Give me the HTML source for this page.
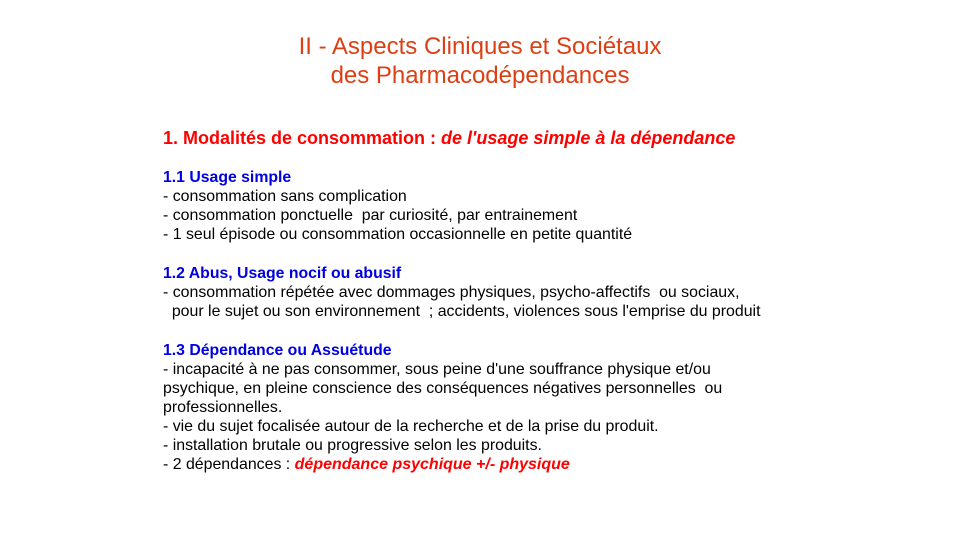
<!DOCTYPE html>
<html><head><meta charset="utf-8"><style>
body{margin:0;width:960px;height:540px;background:#fff;position:relative;overflow:hidden;font-family:"Liberation Sans",Arial,sans-serif;}
.t{position:absolute;left:0;width:960px;text-align:center;color:#dd3f14;font-size:24px;line-height:28px;}
.l{position:absolute;left:163px;font-size:15.9px;line-height:19px;color:#000;white-space:pre;}
.b{color:#0000e0;font-weight:bold;font-size:15.8px;}
.r{color:#f00;font-weight:bold;font-size:18px;line-height:20px;}
.ri{color:#f00;font-weight:bold;font-style:italic;font-size:16px;}
</style></head><body>
<div class="t" style="top:33px">II - Aspects Cliniques et Sociétaux</div>
<div class="t" style="top:62px">des Pharmacodépendances</div>
<div class="l r" style="top:128px">1. Modalités de consommation : <i>de l'usage simple à la dépendance</i></div>
<div class="l b" style="top:168px">1.1 Usage simple</div>
<div class="l" style="top:187px">- consommation sans complication</div>
<div class="l" style="top:206px">- consommation ponctuelle  par curiosité, par entrainement</div>
<div class="l" style="top:225px">- 1 seul épisode ou consommation occasionnelle en petite quantité</div>
<div class="l b" style="top:264px">1.2 Abus, Usage nocif ou abusif</div>
<div class="l" style="top:283px">- consommation répétée avec dommages physiques, psycho-affectifs  ou sociaux,</div>
<div class="l" style="top:302px">  pour le sujet ou son environnement  ; accidents, violences sous l'emprise du produit</div>
<div class="l b" style="top:341px">1.3 Dépendance ou Assuétude</div>
<div class="l" style="top:360px">- incapacité à ne pas consommer, sous peine d'une souffrance physique et/ou</div>
<div class="l" style="top:379px">psychique, en pleine conscience des conséquences négatives personnelles  ou</div>
<div class="l" style="top:398px">professionnelles.</div>
<div class="l" style="top:417px">- vie du sujet focalisée autour de la recherche et de la prise du produit.</div>
<div class="l" style="top:436px">- installation brutale ou progressive selon les produits.</div>
<div class="l" style="top:455px">- 2 dépendances : <span class="ri">dépendance psychique +/- physique</span></div>
</body></html>
